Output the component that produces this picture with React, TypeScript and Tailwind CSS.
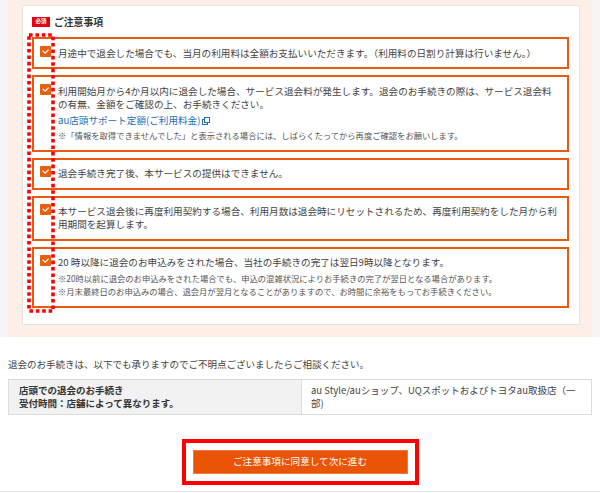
import React from 'react';

const CheckBox = () => (
  <svg width="11" height="11" viewBox="0 0 11 11" className="shrink-0 mt-[-1px]">
    <rect x="0" y="0" width="11" height="11" rx="1" fill="#e8600f" />
    <polyline points="2.6,4.6 5.2,7.1 8.6,3.6" fill="none" stroke="#ffffff" strokeWidth="1.3" />
  </svg>
);

const ExternalIcon = () => (
  <svg width="8" height="8" viewBox="0 0 8 8" className="inline-block ml-[2px] align-[-1px]">
    <rect x="0.5" y="2.5" width="5" height="5" fill="none" stroke="#1f6fb6" strokeWidth="1" />
    <rect x="2.5" y="0.5" width="5" height="5" fill="#ffffff" stroke="#1f6fb6" strokeWidth="1" />
  </svg>
);

const NoticeItem: React.FC<{ children: React.ReactNode }> = ({ children }) => (
  <div className="flex gap-[7px] border-2 border-[#ea5a0c] pl-[6px] pr-[7px] py-[7.5px]">
    <CheckBox />
    <div className="w-[502px] text-[9.6px] leading-[13px] text-[#444]">{children}</div>
  </div>
);

const Note: React.FC<{ children: React.ReactNode; className?: string }> = ({ children, className = '' }) => (
  <p className={`text-[8.3px] leading-[13px] text-[#555] ${className}`}>{children}</p>
);

export default function App() {
  return (
    <div className="relative w-[600px] h-[493px] overflow-hidden bg-white font-['Noto_Sans_CJK_JP','Noto_Sans',sans-serif] text-[#444]">
      <div className="bg-[#f7f5f4] px-[8px]">
        <div className="bg-[#fcefe7] pt-[5px] pl-[14px] pr-[12px] pb-[12px]">
          <div className="bg-white border border-[#ebe3df] pt-[10px] pl-[9px] pr-[10px] pb-[16px]">
            <div className="flex items-center h-[12px] mb-[9px]">
              <span className="flex items-center justify-center w-[18px] h-[10px] bg-[#e60012] text-white text-[5.5px] font-bold leading-none">
                必須
              </span>
              <span className="ml-[4px] text-[9.8px] font-bold leading-[12px] text-[#333]">ご注意事項</span>
            </div>

            <div className="flex flex-col gap-[6px]">
              <NoticeItem>
                <p>月途中で退会した場合でも、当月の利用料は全額お支払いいただきます。（利用料の日割り計算は行いません。）</p>
              </NoticeItem>

              <NoticeItem>
                <p>
                  利用開始月から4か月以内に退会した場合、サービス退会料が発生します。退会のお手続きの際は、サービス退会料の有無、金額をご確認の上、お手続きください。
                </p>
                <p className="mt-[3px] text-[#1f6fb6]">
                  au店頭サポート定額(ご利用料金)
                  <ExternalIcon />
                </p>
                <Note className="mt-[2.5px]">
                  ※「情報を取得できませんでした」と表示される場合には、しばらくたってから再度ご確認をお願いします。
                </Note>
              </NoticeItem>

              <NoticeItem>
                <p>退会手続き完了後、本サービスの提供はできません。</p>
              </NoticeItem>

              <NoticeItem>
                <p>
                  本サービス退会後に再度利用契約する場合、利用月数は退会時にリセットされるため、再度利用契約をした月から利用期間を起算します。
                </p>
              </NoticeItem>

              <NoticeItem>
                <p>20 時以降に退会のお申込みをされた場合、当社の手続きの完了は翌日9時以降となります。</p>
                <Note className="mt-[3px]">
                  ※20時以前に退会のお申込みをされた場合でも、申込の混雑状況によりお手続きの完了が翌日となる場合があります。
                </Note>
                <Note>
                  ※月末最終日のお申込みの場合、退会月が翌月となることがありますので、お時間に余裕をもってお手続きください。
                </Note>
              </NoticeItem>
            </div>
          </div>
        </div>
      </div>

      <p className="mt-[21.5px] px-[8px] text-[9.5px] leading-[13px] text-[#444]">
        退会のお手続きは、以下でも承りますのでご不明点ございましたらご相談ください。
      </p>

      <div className="mx-[8px] mt-[7.5px] flex border border-[#dcdcdc] text-[9.5px] leading-[13px]">
        <div className="w-[293px] shrink-0 bg-[#f2f2f2] border-r border-[#dcdcdc] pl-[10px] py-[4px] font-bold text-[#333]">
          <p>店頭での退会のお手続き</p>
          <p>受付時間：店舗によって異なります。</p>
        </div>
        <div className="flex-1 pl-[9px] pr-[8px] py-[4px] text-[#444]">
          <p>au Style/auショップ、UQスポットおよびトヨタau取扱店（一部)</p>
        </div>
      </div>

      <div className="mt-[24px] flex justify-center">
        <div className="border-4 border-[#ff0000] p-[7px]">
          <button className="flex items-center justify-center w-[215px] h-[24px] bg-[#ea5505] border border-[#f07a3a] text-white text-[9.6px] leading-none">
            ご注意事項に同意して次に進む
          </button>
        </div>
      </div>

      <div className="mt-[6px] h-px bg-[#e3e3e3]" />

      <svg className="absolute left-[27px] top-[33px]" width="28" height="280" viewBox="0 0 28 280">
        <rect x="2" y="2" width="24" height="276" fill="none" stroke="#ff0000" strokeWidth="3.6" strokeDasharray="3.6 2.8" />
      </svg>
    </div>
  );
}
